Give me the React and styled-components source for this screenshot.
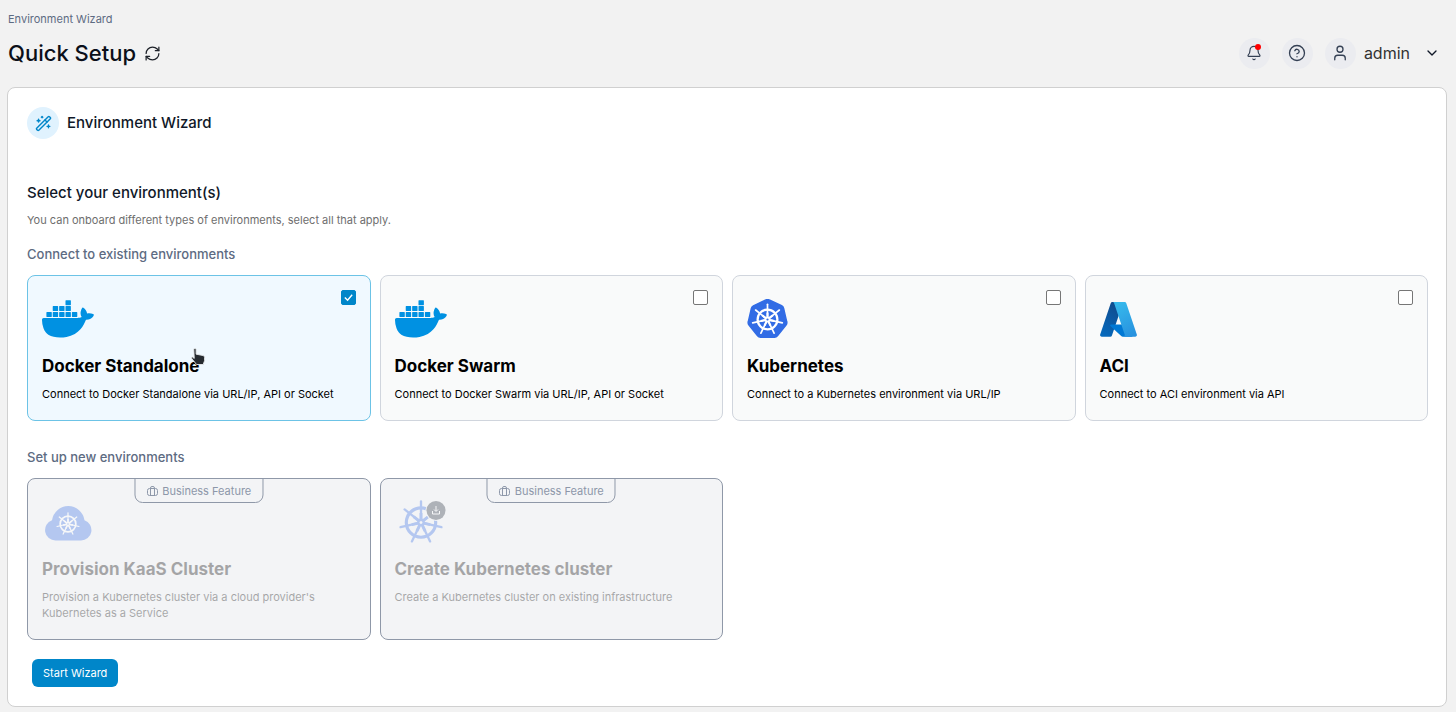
import React, { useState } from "react";
import styled, { createGlobalStyle } from "styled-components";
import {
  Bell,
  ChevronDown,
  CircleHelp,
  RefreshCw,
  User,
  WandSparkles,
} from "lucide-react";
import { SiDocker } from "react-icons/si";

const SPOKES = [0, 1, 2, 3, 4, 5, 6].map((i) => (i * 360) / 7);

// ship wheel centred on 0,0 with a radius of 20
const Wheel = ({ ring = 13 }) => (
  <g fill="none" stroke="currentColor">
    <circle r={ring} strokeWidth="3" />
    <circle r="2.6" strokeWidth="2.4" />
    {SPOKES.map((angle) => (
      <g key={angle} transform={`rotate(${angle})`}>
        <path d="M0 -3.5V-20" strokeWidth="2.2" strokeLinecap="round" />
        <path d="M0 -3.5V-9" strokeWidth="2.8" />
      </g>
    ))}
  </g>
);

const DockerLogo = () => <Whale viewBox="0 3.4 24 17.3" />;

const KubernetesLogo = () => (
  <svg width="41" height="40" viewBox="0 0 41 40">
    <path
      d="M18.8 .9Q20.5 0 22.2 .9L34.6 6.8Q36.2 7.6 36.6 9.3L39.7 22.8Q40.2 24.6 39 26L30.4 36.8Q29.3 38.2 27.5 38.2H13.5Q11.7 38.2 10.6 36.8L2 26Q.8 24.6 1.3 22.8L4.4 9.3Q4.8 7.6 6.4 6.8Z"
      fill="#326ce5"
      stroke="#326ce5"
      strokeWidth="1.5"
    />
    <g transform="translate(20.5 20.5) scale(.76)" color="#fff">
      <Wheel />
    </g>
  </svg>
);

const AzureLogo = () => (
  <svg width="37" height="36" viewBox="4 4 88 86">
    <defs>
      <linearGradient id="azureLeft" x1=".7" y1="0" x2=".2" y2="1">
        <stop offset="0" stopColor="#114a8b" />
        <stop offset="1" stopColor="#0669bc" />
      </linearGradient>
      <linearGradient id="azureRight" x1=".3" y1="0" x2=".7" y2="1">
        <stop offset="0" stopColor="#36b9ec" />
        <stop offset="1" stopColor="#2892df" />
      </linearGradient>
    </defs>
    <path
      d="M33.338 6.544h26.038l-27.03 80.087a4.152 4.152 0 0 1-3.933 2.824H8.149a4.145 4.145 0 0 1-3.928-5.47L29.404 9.368a4.152 4.152 0 0 1 3.934-2.825z"
      fill="url(#azureLeft)"
    />
    <path
      d="M71.175 60.261h-41.29a1.911 1.911 0 0 0-1.305 3.309l26.532 24.764a4.171 4.171 0 0 0 2.846 1.121h23.38z"
      fill="#0078d4"
    />
    <path
      d="M66.595 9.364a4.145 4.145 0 0 0-3.928-2.82H33.648a4.146 4.146 0 0 1 3.928 2.82l25.184 74.62a4.146 4.146 0 0 1-3.928 5.472h29.02a4.146 4.146 0 0 0 3.927-5.472z"
      fill="url(#azureRight)"
    />
  </svg>
);

const KaasLogo = () => (
  <svg width="52" height="44" viewBox="0 0 52 44">
    <path
      d="M13.5 40.5A10.4 10.4 0 0 1 10 20.3A16.4 16.4 0 0 1 42.5 20.3A10.4 10.4 0 0 1 39 40.5Z"
      fill="#326ce5"
    />
    <g transform="translate(26 24) scale(.56)" color="#fff">
      <Wheel ring={14} />
    </g>
  </svg>
);

const ClusterLogo = () => (
  <svg width="52" height="44" viewBox="0 0 52 44">
    <g transform="translate(26 22.5) scale(1.05)" color="#326ce5">
      <Wheel ring={14} />
    </g>
    <circle cx="41" cy="10.5" r="10.5" fill="#f3f4f6" />
    <circle cx="41" cy="10.5" r="9.5" fill="#1f2937" />
    <path
      d="M41 6V11M39 9.5L41 11.5L43 9.5M37.5 11V14H44.5V11"
      fill="none"
      stroke="#fff"
    />
  </svg>
);

const BriefcaseIcon = () => (
  <svg
    width="12"
    height="12"
    viewBox="0 0 24 24"
    fill="none"
    stroke="currentColor"
    strokeWidth="2"
  >
    <rect x="2" y="7" width="20" height="14" rx="4" />
    <path d="M8 21V6a3 3 0 0 1 3-3h2a3 3 0 0 1 3 3v15" />
  </svg>
);

const HandCursor = () => (
  <Cursor width="16" height="19" viewBox="0 0 17 20" aria-hidden="true">
    <path
      d="M4 2Q5.5 .5 6.5 2V7.5L14 9Q15.5 9.5 15.5 11V14.5L14 18.5H7L2 12.5Q1 11 2.5 10.5L4.5 12Z"
      fill="#262b30"
      stroke="#e4e7ea"
    />
  </Cursor>
);

const existing = [
  {
    id: "standalone",
    title: "Docker Standalone",
    text: "Connect to Docker Standalone via URL/IP, API or Socket",
    Logo: DockerLogo,
  },
  {
    id: "swarm",
    title: "Docker Swarm",
    text: "Connect to Docker Swarm via URL/IP, API or Socket",
    Logo: DockerLogo,
  },
  {
    id: "kubernetes",
    title: "Kubernetes",
    text: "Connect to a Kubernetes environment via URL/IP",
    Logo: KubernetesLogo,
  },
  {
    id: "aci",
    title: "ACI",
    text: "Connect to ACI environment via API",
    Logo: AzureLogo,
  },
];

const upcoming = [
  {
    id: "kaas",
    title: "Provision KaaS Cluster",
    text: "Provision a Kubernetes cluster via a cloud provider's Kubernetes as a Service",
    Logo: KaasLogo,
  },
  {
    id: "create",
    title: "Create Kubernetes cluster",
    text: "Create a Kubernetes cluster on existing infrastructure",
    Logo: ClusterLogo,
  },
];

const App = () => {
  const [selected, setSelected] = useState(["standalone"]);

  const toggle = (id) => {
    setSelected((current) =>
      current.includes(id)
        ? current.filter((item) => item !== id)
        : [...current, id]
    );
  };

  return (
    <Page>
      <GlobalStyle />
      <Breadcrumb>Environment Wizard</Breadcrumb>
      <Header>
        <Title>Quick Setup</Title>
        <PlainButton type="button" aria-label="Refresh">
          <RefreshCw size={17} strokeWidth={1.75} />
        </PlainButton>
        <Tools>
          <RoundButton type="button" aria-label="Notifications">
            <Bell size={16} strokeWidth={1.75} />
            <Dot />
          </RoundButton>
          <RoundButton type="button" aria-label="Help">
            <CircleHelp size={18} strokeWidth={1.75} />
          </RoundButton>
          <UserButton type="button">
            <Round>
              <User size={18} strokeWidth={1.75} />
            </Round>
            admin
            <ChevronDown size={16} strokeWidth={2} />
          </UserButton>
        </Tools>
      </Header>
      <Panel>
        <PanelHeader>
          <PanelIcon>
            <WandSparkles size={17} strokeWidth={2} />
          </PanelIcon>
          <PanelTitle>Environment Wizard</PanelTitle>
        </PanelHeader>
        <SectionTitle>Select your environment(s)</SectionTitle>
        <Hint>
          You can onboard different types of environments, select all that
          apply.
        </Hint>
        <GroupTitle>Connect to existing environments</GroupTitle>
        <Grid>
          {existing.map(({ id, title, text, Logo }) => (
            <Card key={id} $checked={selected.includes(id)}>
              <LogoBox>
                <Logo />
              </LogoBox>
              <Checkbox
                type="checkbox"
                checked={selected.includes(id)}
                onChange={() => toggle(id)}
              />
              <CardTitle>{title}</CardTitle>
              <CardText>{text}</CardText>
              {id === "standalone" && <HandCursor />}
            </Card>
          ))}
        </Grid>
        <GroupTitle>Set up new environments</GroupTitle>
        <Grid>
          {upcoming.map(({ id, title, text, Logo }) => (
            <DisabledCard key={id} type="button" disabled>
              <Badge>
                <BriefcaseIcon />
                Business Feature
              </Badge>
              <Faded>
                <LogoBox>
                  <Logo />
                </LogoBox>
                <CardTitle>{title}</CardTitle>
                <CardText>{text}</CardText>
              </Faded>
            </DisabledCard>
          ))}
        </Grid>
        <StartButton type="button">Start Wizard</StartButton>
      </Panel>
    </Page>
  );
};

const GlobalStyle = createGlobalStyle`
  * {
    box-sizing: border-box;
  }

  body {
    margin: 0;
    background-color: #f2f2f2;
    font-family: Inter, "Liberation Sans", sans-serif;
    color: #101828;
  }

  button {
    font-family: inherit;
    cursor: pointer;
  }

  svg {
    display: block;
    flex-shrink: 0;
  }
`;

const Page = styled.div`
  padding: 11px 9px 5px 7px;
`;

const Breadcrumb = styled.div`
  padding-left: 1px;
  font-size: 11px;
  line-height: 16px;
  color: #5d6b82;
`;

const Header = styled.header`
  display: flex;
  align-items: center;
  gap: 8px;
  height: 32px;
  margin: 10px 0 18px;
  padding-left: 1px;
`;

const Title = styled.h1`
  margin: 0;
  font-size: 22px;
  font-weight: 500;
  line-height: 32px;
  color: #0b0f19;
`;

const PlainButton = styled.button`
  padding: 0;
  border: none;
  background: none;
  color: #1d2129;
`;

const Tools = styled.div`
  display: flex;
  align-items: center;
  gap: 12px;
  margin-left: auto;
  padding-right: 7px;
`;

const Round = styled.span`
  display: flex;
  align-items: center;
  justify-content: center;
  width: 31px;
  height: 31px;
  border-radius: 50%;
  background-color: #ebecf0;
  color: #344054;
`;

const RoundButton = styled(Round).attrs({ as: "button" })`
  position: relative;
  padding: 0;
  border: none;
`;

const Dot = styled.span`
  position: absolute;
  top: 6px;
  right: 9px;
  width: 6px;
  height: 6px;
  border-radius: 50%;
  background-color: #f00;
`;

const UserButton = styled.button`
  display: flex;
  align-items: center;
  gap: 8px;
  padding: 0;
  border: none;
  background: none;
  font-size: 16px;
  color: #333;

  > svg {
    margin-left: 6px;
    color: #101828;
  }
`;

const Panel = styled.main`
  padding: 19px 18px 18px 19px;
  border: 1px solid #d0d0d0;
  border-radius: 8px;
  background-color: #fff;
`;

const PanelHeader = styled.div`
  display: flex;
  align-items: center;
  gap: 8px;
  margin-bottom: 42px;
`;

const PanelIcon = styled.span`
  display: flex;
  align-items: center;
  justify-content: center;
  width: 32px;
  height: 32px;
  border-radius: 50%;
  background-color: #e0f2fe;
  color: #0086c9;
`;

const PanelTitle = styled.h2`
  margin: 0;
  font-size: 15px;
  font-weight: 500;
  line-height: 24px;
`;

const SectionTitle = styled.h3`
  margin: 0;
  font-size: 15px;
  font-weight: 500;
  line-height: 24px;
`;

const Hint = styled.p`
  margin: 7px 0 16px;
  font-size: 11px;
  line-height: 16px;
  color: #6e6e6e;
`;

const GroupTitle = styled.h4`
  margin: 0;
  font-size: 13px;
  font-weight: 500;
  line-height: 20px;
  color: #5d6b82;
`;

const Grid = styled.div`
  display: grid;
  grid-template-columns: repeat(4, minmax(0, 1fr));
  gap: 9px;
  margin: 11px 0 26px;

  &:last-of-type {
    margin-bottom: 19px;
  }
`;

const Card = styled.label`
  position: relative;
  display: grid;
  grid-template-columns: 1fr auto;
  align-content: start;
  padding: 14px 14px 18px;
  border: 1px solid ${(props) => (props.$checked ? "#6cc3e6" : "#d0d5dd")};
  border-radius: 8px;
  background-color: ${(props) => (props.$checked ? "#f0f9ff" : "#f9fafa")};
  color: #000;
  cursor: pointer;
`;

const LogoBox = styled.span`
  display: flex;
  align-items: center;
  height: 58px;
`;

const Whale = styled(SiDocker)`
  width: 52px;
  height: 38px;
  color: #0091e2;
`;

const Checkbox = styled.input`
  appearance: none;
  width: 15px;
  height: 15px;
  margin: 0;
  border: 1px solid #767676;
  border-radius: 2px;
  background: #fff center / 11px no-repeat;

  &:checked {
    border-color: #0086c9;
    background-color: #0086c9;
    background-image: url("data:image/svg+xml,%3Csvg xmlns='http://www.w3.org/2000/svg' viewBox='0 0 12 12' fill='none' stroke='white' stroke-width='1.5'%3E%3Cpath d='M2 6l3 3 5-6'/%3E%3C/svg%3E");
  }
`;

const CardTitle = styled.span`
  display: block;
  grid-column: 1 / -1;
  margin-top: 6px;
  font-size: 17px;
  font-weight: 700;
  line-height: 24px;
`;

const CardText = styled.span`
  display: block;
  grid-column: 1 / -1;
  margin-top: 8px;
  font-size: 11px;
  line-height: 16px;
`;

const Cursor = styled.svg`
  position: absolute;
  top: 71px;
  left: 162px;
`;

const DisabledCard = styled.button`
  position: relative;
  display: flex;
  align-items: flex-start;
  padding: 14px 14px 18px;
  border: 1px solid #8f98a8;
  border-radius: 8px;
  background-color: #f3f4f6;
  text-align: left;
  color: #000;
`;

const Faded = styled.span`
  display: block;
  opacity: 0.32;
`;

const Badge = styled.span`
  position: absolute;
  top: -1px;
  left: 50%;
  display: flex;
  align-items: center;
  gap: 4px;
  height: 25px;
  padding: 0 11px;
  border: 1px solid #8f98a8;
  border-radius: 0 0 8px 8px;
  font-size: 11px;
  white-space: nowrap;
  color: #8d97a9;
  transform: translateX(-50%);
`;

const StartButton = styled.button`
  display: block;
  height: 28px;
  margin: 0 5px 1px;
  padding: 0 11px;
  border: none;
  border-radius: 6px;
  background-color: #0086c9;
  font-size: 11px;
  line-height: 16px;
  color: #fff;
`;

export default App;
